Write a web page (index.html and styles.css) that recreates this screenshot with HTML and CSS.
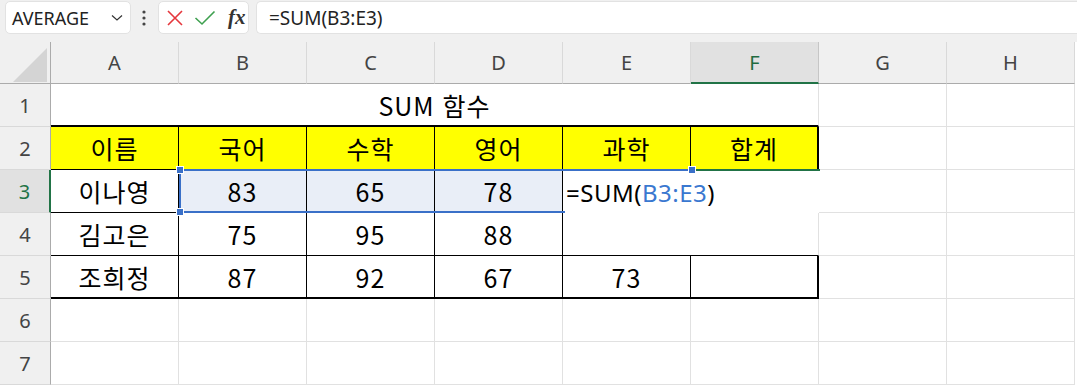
FILE: index.html
```html
<!DOCTYPE html>
<html lang="ko">

<head>
    <meta charset="UTF-8">
    <title>SUM 함수</title>
    <link rel="stylesheet" href="styles.css">
</head>

<body>
    <div class="app">
        <!-- 수식 입력줄 -->
        <div class="formula-bar">
            <div class="name-box">
                <span>AVERAGE</span>
                <svg class="chevron" width="12" height="8" viewBox="0 0 12 8"><polyline points="1,1.5 6,6 11,1.5" fill="none" stroke="#333" stroke-width="1.2"/></svg>
            </div>
            <svg class="bar-dots" width="6" height="20" viewBox="0 0 6 20">
                <circle cx="3" cy="4" r="1.6" fill="#444"/>
                <circle cx="3" cy="10" r="1.6" fill="#444"/>
                <circle cx="3" cy="16" r="1.6" fill="#444"/>
            </svg>
            <div class="fx-box">
                <svg width="18" height="18" viewBox="0 0 18 18"><path d="M2 2 L16 16 M16 2 L2 16" stroke="#e5373d" stroke-width="1.6" fill="none"/></svg>
                <svg width="22" height="18" viewBox="0 0 22 18"><polyline points="1.5,9 8,15 20.5,2.5" stroke="#3ea04f" stroke-width="1.6" fill="none"/></svg>
                <span class="fx">fx</span>
            </div>
            <div class="formula-input">=SUM(B3:E3)</div>
        </div>

        <!-- 시트 -->
        <div class="sheet">
            <div class="corner">
                <svg width="51" height="42" viewBox="0 0 51 42"><polygon points="13,40 47,40 47,6" fill="#d4d4d4"/></svg>
            </div>
            <div class="col-head">A</div>
            <div class="col-head">B</div>
            <div class="col-head">C</div>
            <div class="col-head">D</div>
            <div class="col-head">E</div>
            <div class="col-head active">F</div>
            <div class="col-head">G</div>
            <div class="col-head">H</div>

            <div class="row-head">1</div>
            <div class="cell title">SUM 함수</div>
            <div class="cell"></div>
            <div class="cell"></div>

            <div class="row-head">2</div>
            <div class="cell hd">이름</div>
            <div class="cell hd">국어</div>
            <div class="cell hd">수학</div>
            <div class="cell hd">영어</div>
            <div class="cell hd">과학</div>
            <div class="cell hd last">합계</div>
            <div class="cell"></div>
            <div class="cell"></div>

            <div class="row-head active">3</div>
            <div class="cell b">이나영</div>
            <div class="cell b sel">83</div>
            <div class="cell b sel">65</div>
            <div class="cell b sel">78</div>
            <div class="cell open"></div>
            <div class="cell open edge"></div>
            <div class="cell"></div>
            <div class="cell"></div>

            <div class="row-head">4</div>
            <div class="cell b">김고은</div>
            <div class="cell b">75</div>
            <div class="cell b">95</div>
            <div class="cell b">88</div>
            <div class="cell under"></div>
            <div class="cell under edge"></div>
            <div class="cell"></div>
            <div class="cell"></div>

            <div class="row-head">5</div>
            <div class="cell b bottom">조희정</div>
            <div class="cell b bottom">87</div>
            <div class="cell b bottom">92</div>
            <div class="cell b bottom">67</div>
            <div class="cell b bottom">73</div>
            <div class="cell b bottom last"></div>
            <div class="cell"></div>
            <div class="cell"></div>

            <div class="row-head">6</div>
            <div class="cell"></div><div class="cell"></div><div class="cell"></div><div class="cell"></div>
            <div class="cell"></div><div class="cell"></div><div class="cell"></div><div class="cell"></div>

            <div class="row-head">7</div>
            <div class="cell"></div><div class="cell"></div><div class="cell"></div><div class="cell"></div>
            <div class="cell"></div><div class="cell"></div><div class="cell"></div><div class="cell"></div>

            <!-- 참조 범위와 편집 중인 셀 -->
            <div class="ref-range"></div>
            <div class="edit-box">=SUM(<span class="ref">B3:E3</span>)</div>
            <div class="active-line"></div>
            <div class="handle h1"></div>
            <div class="handle h2"></div>
            <div class="handle h3"></div>
        </div>
    </div>
</body>

</html>
```

FILE: styles.css
```css
* {
    margin: 0;
    padding: 0;
    box-sizing: border-box;
}

body {
    background-color: #f0f0f0;
    font-family: 'Noto Sans', sans-serif;
    width: 1077px;
    height: 385px;
    overflow: hidden;
}

.formula-bar {
    height: 42px;
    display: flex;
    align-items: flex-start;
    padding-top: 1px;
    padding-left: 5px;
}

.name-box {
    width: 126px;
    height: 33px;
    background-color: #fff;
    border: 1px solid #e2e2e2;
    border-radius: 5px;
    display: flex;
    align-items: center;
    justify-content: space-between;
    padding: 0 7px 0 6px;
    font-size: 18px;
    color: #222;
}

.bar-dots {
    margin: 7px 11px 0 10px;
}

.fx-box {
    width: 91px;
    height: 33px;
    background-color: #fff;
    border: 1px solid #e2e2e2;
    border-radius: 5px;
    display: flex;
    align-items: center;
    gap: 10px;
    padding-left: 7px;
}

.fx {
    font-family: 'Liberation Serif', serif;
    font-style: italic;
    font-weight: bold;
    font-size: 21px;
    color: #333;
    margin-left: 2px;
}

.formula-input {
    flex: 1;
    height: 33px;
    margin-left: 7px;
    background-color: #fff;
    border: 1px solid #e2e2e2;
    border-right: none;
    border-radius: 5px 0 0 5px;
    display: flex;
    align-items: center;
    padding-left: 12px;
    font-size: 19px;
    color: #222;
}

.sheet {
    position: relative;
    display: grid;
    grid-template-columns: 51px repeat(8, 128px);
    grid-template-rows: 42px repeat(7, 43px);
    background-color: #fff;
}

.corner {
    background-color: #f0f0f0;
    border-right: 1px solid #ababab;
    border-bottom: 1px solid #ababab;
}

.corner svg {
    display: block;
}

.col-head {
    background-color: #f0f0f0;
    border-right: 1px solid #d9d9d9;
    border-bottom: 1px solid #ababab;
    display: flex;
    align-items: center;
    justify-content: center;
    font-size: 20px;
    color: #444;
}

.col-head.active {
    background-color: #e1e1e1;
    border-bottom: 2px solid #217346;
    border-right-color: #c6c6c6;
    color: #1f6b40;
}

.row-head {
    background-color: #f0f0f0;
    border-right: 1px solid #ababab;
    border-bottom: 1px solid #d9d9d9;
    display: flex;
    align-items: center;
    justify-content: center;
    font-size: 20px;
    color: #444;
}

.row-head.active {
    background-color: #e1e1e1;
    border-right: 2px solid #217346;
    color: #217346;
}

.cell {
    border-right: 1px solid #e1e1e1;
    border-bottom: 1px solid #e1e1e1;
    display: flex;
    align-items: center;
    justify-content: center;
    font-family: 'Noto Sans CJK KR', 'Noto Sans', sans-serif;
    font-size: 25px;
    letter-spacing: 1px;
    color: #000;
}

.title {
    grid-column: span 6;
    border-bottom: 2px solid #000;
}

.hd {
    background-color: #ffff00;
    border-right-color: #000;
    border-bottom-color: #000;
}

.b {
    border-right-color: #000;
    border-bottom-color: #000;
}

.sel {
    background-color: #e9eef7;
}

.open {
    border-right: none;
    border-bottom: none;
}

.open.edge {
    border-right: 1px solid #e1e1e1;
}

.under {
    border-right: none;
    border-bottom-color: #000;
}

.under.edge {
    border-right: 1px solid #e1e1e1;
}

.bottom {
    border-bottom: 2px solid #000;
}

.last {
    border-right: 2px solid #000;
}

.ref-range {
    position: absolute;
    left: 179px;
    top: 127px;
    width: 514px;
    height: 44px;
    border: 2px solid #3a70c8;
    border-right: none;
}

.edit-box {
    position: absolute;
    left: 565px;
    top: 129px;
    width: 254px;
    height: 42px;
    background-color: #fff;
    display: flex;
    align-items: center;
    padding-left: 1px;
    font-family: 'Noto Sans', 'Noto Sans CJK KR', sans-serif;
    font-size: 24px;
    letter-spacing: 0.5px;
    color: #000;
    white-space: nowrap;
}

.edit-box .ref {
    color: #3a78d0;
}

.active-line {
    position: absolute;
    left: 692px;
    top: 127px;
    width: 128px;
    height: 2px;
    background-color: #217346;
}

.handle {
    position: absolute;
    width: 6px;
    height: 6px;
    background-color: #3a70c8;
    border: 1px solid #fff;
    box-sizing: content-box;
}

.h1 {
    left: 176px;
    top: 124px;
}

.h2 {
    left: 176px;
    top: 166px;
}

.h3 {
    left: 688px;
    top: 124px;
}
```
